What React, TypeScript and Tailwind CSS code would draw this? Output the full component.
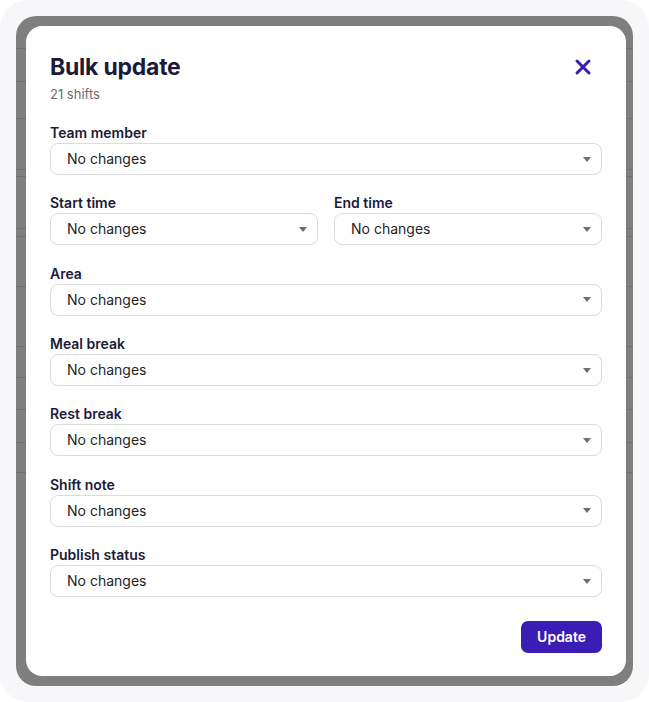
import { X } from 'lucide-react'

const BACKDROP_ROWS = [
  'h-[33px]',
  'h-[33px]',
  'h-[37px]',
  'h-[51px]',
  'h-[7px]',
  'h-[52px]',
  'h-[8px]',
  'h-[50px]',
  'h-[60px]',
  'h-[31px]',
  'h-[32px]',
  'h-[33px]',
  'h-[30px]',
]

function SelectBox() {
  return (
    <div className="flex h-8 items-center justify-between rounded-lg border border-[#dcdce0] bg-white pl-4 pr-[10px] text-sm text-[#1f1f24]">
      <span>No changes</span>
      <span className="h-0 w-0 border-x-[4px] border-t-[5px] border-x-transparent border-t-[#6e6e73]" />
    </div>
  )
}

function Field({ label }: { label: string }) {
  return (
    <div className="flex flex-col">
      <label className="text-sm leading-5 font-semibold text-[#1c1a3a]">{label}</label>
      <SelectBox />
    </div>
  )
}

export default function App() {
  return (
    <div className="h-[702px] w-[649px] bg-white font-['Inter',sans-serif]">
      <div className="h-full rounded-[28px] bg-[#f7f7fa] p-4">
        <div className="relative h-[670px] w-[617px] overflow-hidden rounded-[20px] bg-white">
          {BACKDROP_ROWS.map((h, i) => (
            <div key={i} className={`${h} border-b border-[#e0e0e0]`} />
          ))}

          <div className="absolute inset-0 bg-black/50 pb-[10px] pl-[10px] pr-[7px] pt-[10px]">
            <div className="flex h-full flex-col rounded-2xl bg-white px-6 pb-[23px] pt-6">
              <header className="flex items-start justify-between">
                <div>
                  <h2 className="text-[23px] leading-[34px] font-bold tracking-[-0.01em] text-[#1c1a3a]">
                    Bulk update
                  </h2>
                  <p className="text-[13px] leading-5 text-[#6b6b70]">21 shifts</p>
                </div>
                <button className="mr-[7px] mt-[5px] flex h-6 w-6 items-center justify-center text-[#3a1db5]">
                  <X size={24} strokeWidth={3} />
                </button>
              </header>

              <form className="mt-[19px] flex flex-col gap-[18.35px]">
                <Field label="Team member" />
                <div className="grid grid-cols-2 gap-4">
                  <Field label="Start time" />
                  <Field label="End time" />
                </div>
                <Field label="Area" />
                <Field label="Meal break" />
                <Field label="Rest break" />
                <Field label="Shift note" />
                <Field label="Publish status" />
              </form>

              <div className="mt-auto flex justify-end">
                <button className="h-8 rounded-[7px] bg-[#3a1db5] px-4 text-sm font-semibold text-white">
                  Update
                </button>
              </div>
            </div>
          </div>
        </div>
      </div>
    </div>
  )
}
